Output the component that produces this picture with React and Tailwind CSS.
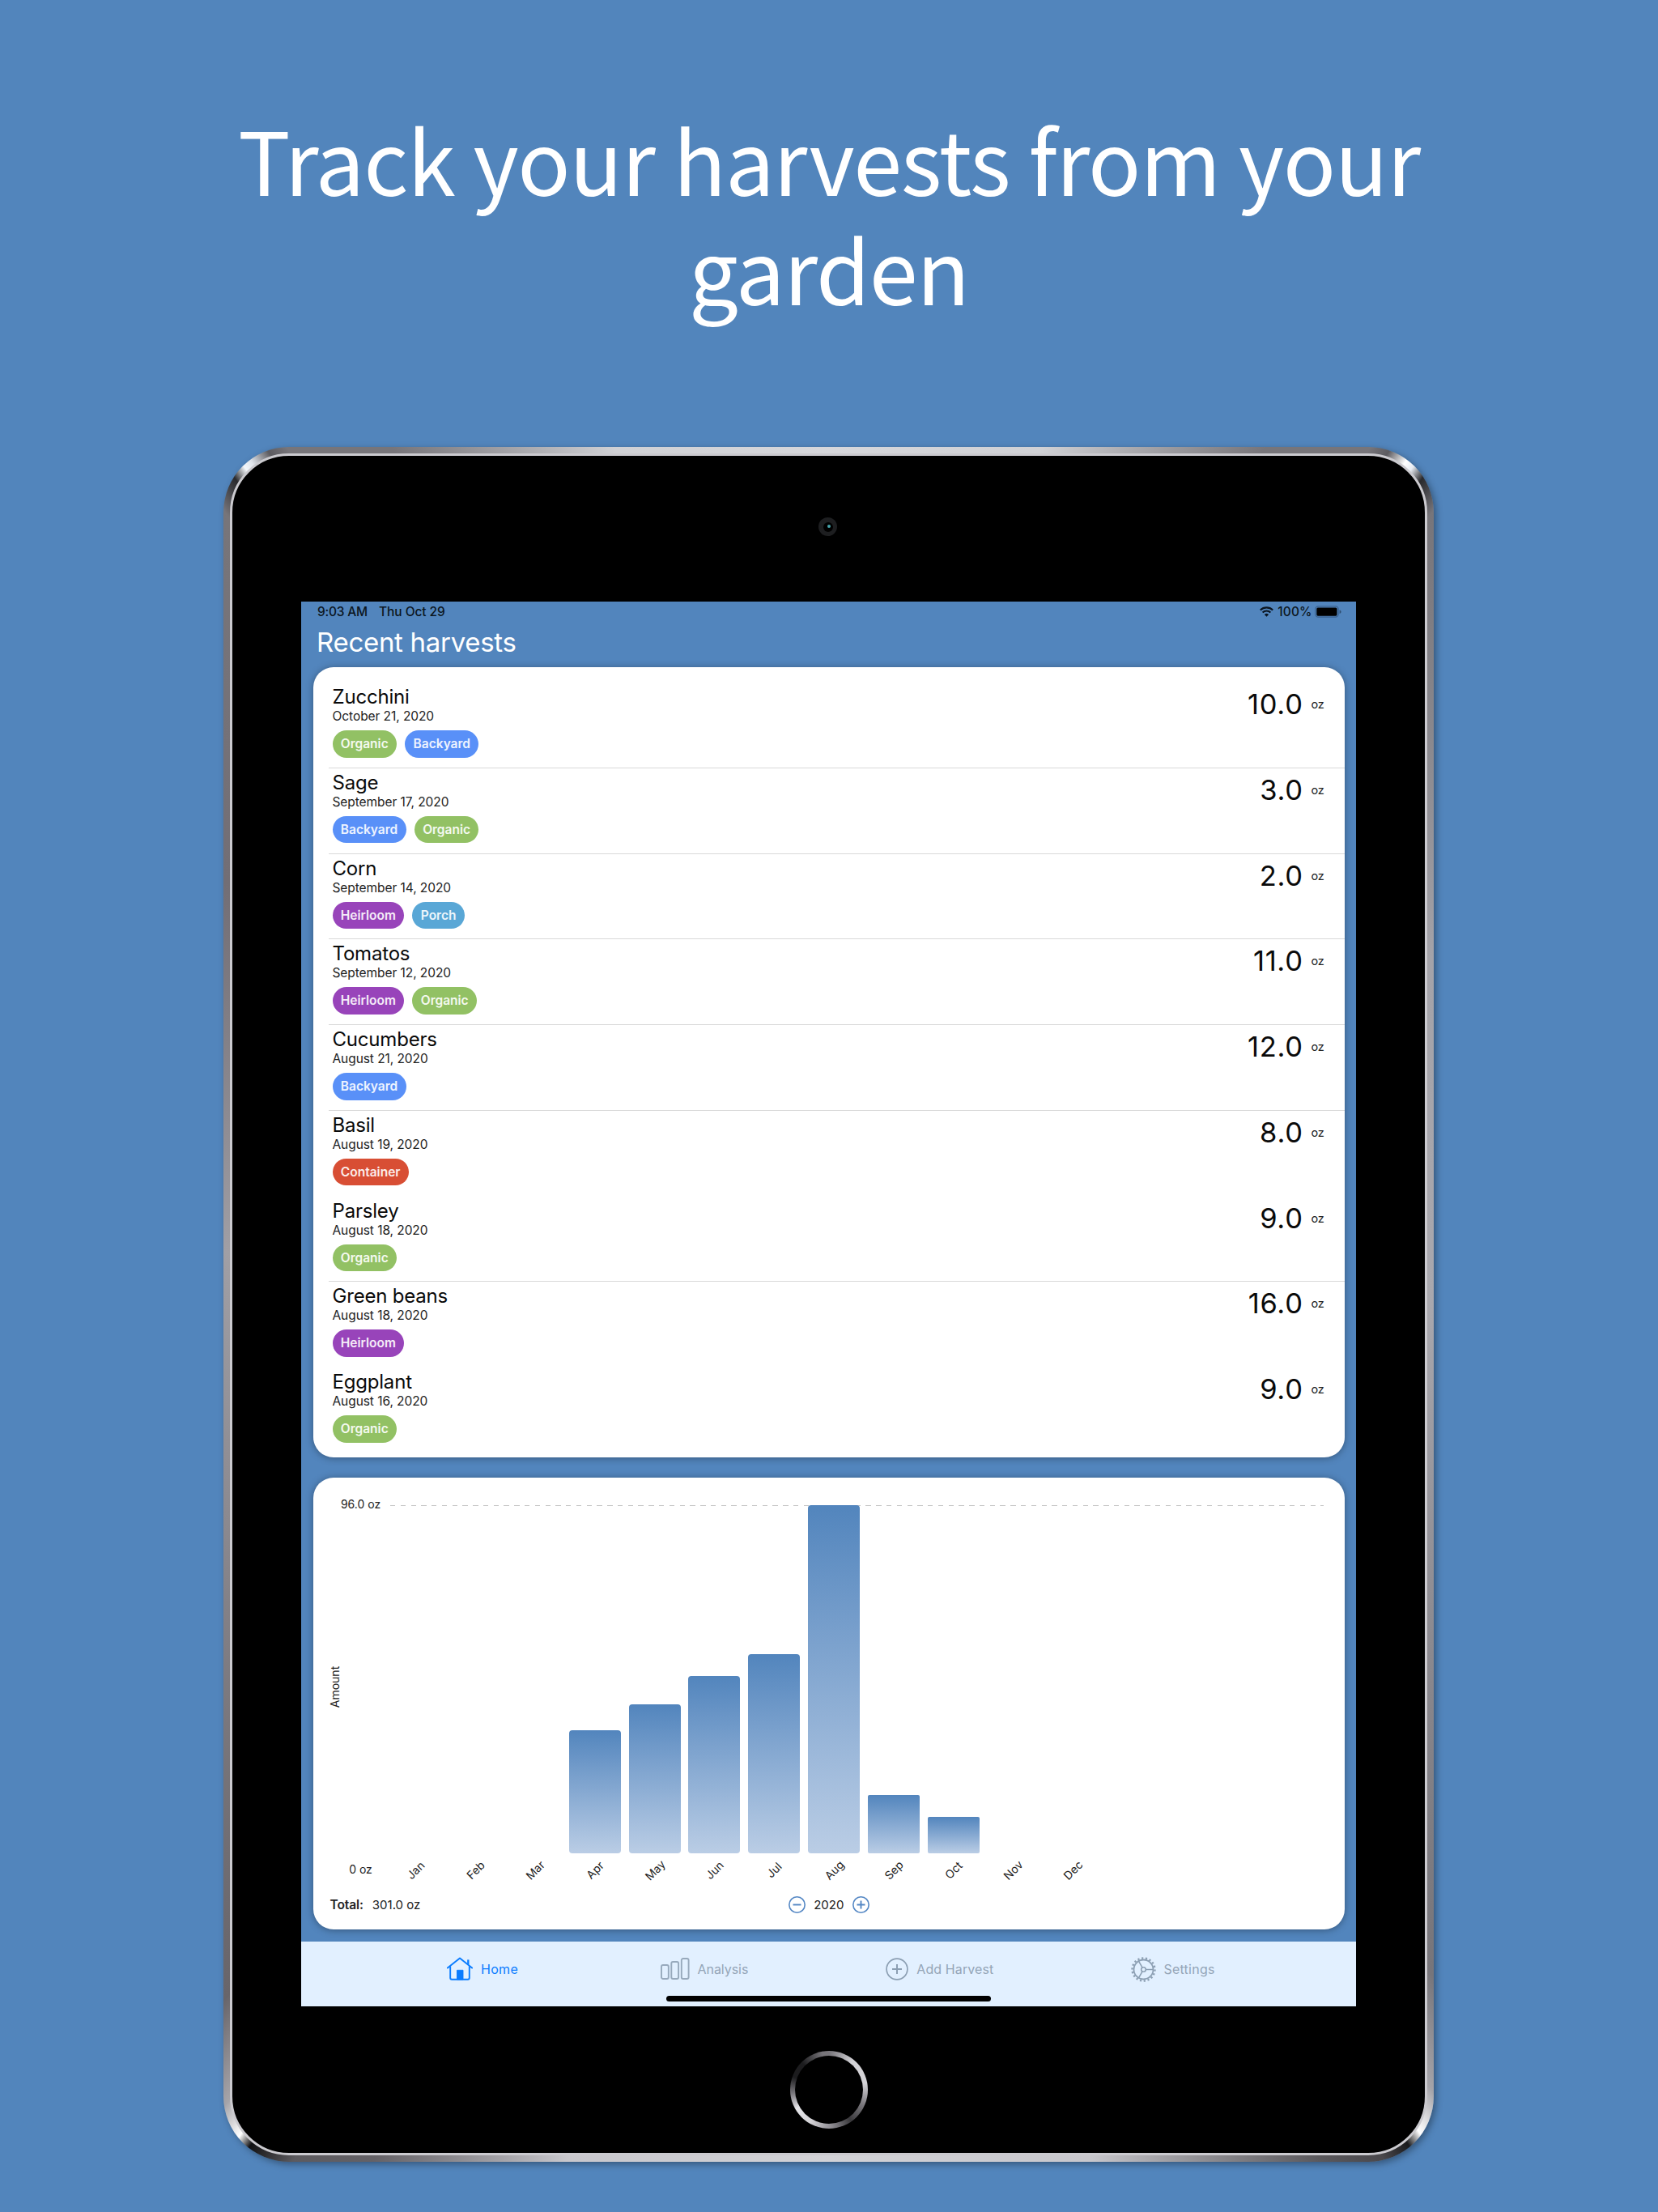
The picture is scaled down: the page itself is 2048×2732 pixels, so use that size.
import React from "react";

const CHIP = {
  Organic: "bg-[#92c164]",
  Backyard: "bg-[#5990f8]",
  Heirloom: "bg-[#9844ba]",
  Porch: "bg-[#59a7d6]",
  Container: "bg-[#d84e34]",
};

const HARVESTS = [
  { name: "Zucchini", date: "October 21, 2020", tags: ["Organic", "Backyard"], amount: "10.0", line: true },
  { name: "Sage", date: "September 17, 2020", tags: ["Backyard", "Organic"], amount: "3.0", line: true },
  { name: "Corn", date: "September 14, 2020", tags: ["Heirloom", "Porch"], amount: "2.0", line: true },
  { name: "Tomatos", date: "September 12, 2020", tags: ["Heirloom", "Organic"], amount: "11.0", line: true },
  { name: "Cucumbers", date: "August 21, 2020", tags: ["Backyard"], amount: "12.0", line: true },
  { name: "Basil", date: "August 19, 2020", tags: ["Container"], amount: "8.0", line: false },
  { name: "Parsley", date: "August 18, 2020", tags: ["Organic"], amount: "9.0", line: true },
  { name: "Green beans", date: "August 18, 2020", tags: ["Heirloom"], amount: "16.0", line: false },
  { name: "Eggplant", date: "August 16, 2020", tags: ["Organic"], amount: "9.0", line: false },
];

const MONTHS = [
  ["Jan", 0],
  ["Feb", 0],
  ["Mar", 0],
  ["Apr", 34],
  ["May", 41],
  ["Jun", 49],
  ["Jul", 55],
  ["Aug", 96],
  ["Sep", 16],
  ["Oct", 10],
  ["Nov", 0],
  ["Dec", 0],
];

function StatusBar() {
  return (
    <div className="flex h-[22px] items-center pt-[3px] pl-5 pr-[18.5px] text-[15.5px] leading-[20px] font-medium text-[#0b1520]">
      <span className="tracking-[-0.2px]">9:03 AM</span>
      <span className="ml-[14px] tracking-[-0.08px]">Thu Oct 29</span>
      <div className="ml-auto flex items-center">
        <svg width="17" height="13" viewBox="0 0 17 13" fill="none" stroke="#0b1520" strokeWidth="2.1">
          <path d="M0.8 4.6A10.9 10.9 0 0 1 16.2 4.6" />
          <path d="M3.6 7.5A7 7 0 0 1 13.4 7.5" />
          <path d="M8.5 12.8L5.9 10.1A3.7 3.7 0 0 1 11.1 10.1Z" fill="#0b1520" stroke="none" />
        </svg>
        <span className="ml-[5.5px] tracking-[0.1px]">100%</span>
        <svg className="ml-[3px]" width="33" height="15" viewBox="0 0 33 15">
          <rect x="0.8" y="0.8" width="28.4" height="13.4" rx="3.6" fill="none" stroke="#3a6190" strokeWidth="1.2" />
          <rect x="2.3" y="2.5" width="25.2" height="10.2" rx="1.6" fill="#000" />
          <path d="M30.6 5.2c1.4.5 2 1.300 2 2.400s-.6 1.900-2 2.400z" fill="#2f4f72" />
        </svg>
      </div>
    </div>
  );
}

function HarvestRow({ item }) {
  return (
    <li
      className={
        "ml-[19px] flex h-[105.75px] items-start border-b pl-[5px] pr-[25.500px] " +
        (item.line ? "border-[#d9d9d9]" : "border-transparent")
      }
    >
      <div className="pt-[3px]">
        <div className="text-[24px] leading-[29px] tracking-[-0.2px] text-[#0a0a0a]">{item.name}</div>
        <div className="text-[15.5px] leading-[19px] tracking-[-0.07px] text-[#222]">{item.date}</div>
        <div className="mt-[8px] flex gap-[10.300px]">
          {item.tags.map((tag) => (
            <span
              key={tag}
              className={
                "h-[33.5px] rounded-full px-[10.300px] text-[15.5px] leading-[33.5px] font-semibold text-white/90 " + CHIP[tag]
              }
            >
              {tag}
            </span>
          ))}
        </div>
      </div>
      <div className="ml-auto flex items-center gap-[10px] pt-[6px]">
        <span className="text-[34.5px] leading-[42px] tracking-[0.7px] text-[#0a0a0a]">{item.amount}</span>
        <span className="text-[14.5px] leading-[18px] tracking-[-0.3px] text-[#222]">oz</span>
      </div>
    </li>
  );
}

function YearButton({ plus }) {
  return (
    <svg width="21" height="21" viewBox="0 0 21 21" fill="none" stroke="#5487c4" strokeWidth="1.6">
      <circle cx="10.5" cy="10.5" r="9.7" />
      <path d={plus ? "M5.500 10.500h10M10.500 5.500v10" : "M5.500 10.500h10"} strokeWidth="1.9" />
    </svg>
  );
}

function Chart() {
  return (
    <section className="mt-[25px] h-[558px] rounded-[25px] bg-white px-[21px] pt-6 text-[#222] shadow-[0_1px_10px_rgba(0,0,0,0.35)]">
      <div className="flex h-[468px] text-[14px] leading-[17px]">
        <div className="flex w-[13.500px] items-center justify-center pr-[2px]">
          <span className="-rotate-90 whitespace-nowrap">Amount</span>
        </div>
        <div className="flex w-[49px] flex-col items-center justify-between whitespace-nowrap">
          <span>96.0 oz</span>
          <span>0 oz</span>
        </div>
        <div className="ml-[11.500px] w-[1153px] pt-[10px]">
          <div className="h-px bg-[repeating-linear-gradient(90deg,#c6c6c6_0px,#c6c6c6_6.400px,transparent_6.400px,transparent_12.770px)]" />
          <div className="-mt-px flex h-[430px] items-end gap-[9.800px]">
            {MONTHS.map(([m, v]) => (
              <div
                key={m}
                className={
                  "w-[64px] bg-linear-to-b from-[#5285bd] to-[#bacde5] " + (v > 16 ? "rounded-[4px]" : "rounded-[2px]")
                }
                style={{ height: `${(v / 96) * 100}%` }}
              />
            ))}
          </div>
          <div className="flex gap-[9.800px] pt-[12px]">
            {MONTHS.map(([m]) => (
              <div key={m} className="flex w-[64px] justify-center">
                <span className="-rotate-45">{m}</span>
              </div>
            ))}
          </div>
        </div>
      </div>
      <div className="mt-[25px] grid grid-cols-3 items-center text-[15px] leading-[21px]">
        <div className="flex gap-[11px]">
          <span className="text-[15.5px] font-semibold tracking-[-0.1px]">Total:</span>
          <span>301.0 oz</span>
        </div>
        <div className="flex items-center justify-center gap-[10.500px]">
          <YearButton />
          <span>2020</span>
          <YearButton plus />
        </div>
      </div>
    </section>
  );
}

function HomeIcon() {
  return (
    <svg width="32" height="30" viewBox="0 0 32 30" fill="none" stroke="#0a7cff" strokeWidth="1.9" strokeLinejoin="round">
      <path d="M0.900 13.600L16 1.600L31.100 13.600" strokeLinecap="round" />
      <path d="M26.300 9.500V3.400" strokeWidth="2.300" />
      <path d="M4.200 11.500V25.800a1.900 1.900 0 0 0 1.900 1.900H25.900a1.900 1.900 0 0 0 1.900-1.900V11.500" />
      <path d="M12.500 28V16.300H20V28z" fill="#0a7cff" strokeWidth="0.900" />
    </svg>
  );
}

function BarsIcon() {
  return (
    <svg width="36" height="28" viewBox="0 0 36 28" fill="none" stroke="#97a9bc" strokeWidth="1.900">
      <rect x="1" y="9" width="8.800" height="17" rx="2" />
      <rect x="13.300" y="5" width="8.800" height="21" rx="2" />
      <rect x="25.800" y="1" width="8.800" height="25" rx="2" />
    </svg>
  );
}

function AddIcon() {
  return (
    <svg width="28" height="28" viewBox="0 0 28 28" fill="none" stroke="#8c9fb3" strokeWidth="1.700">
      <circle cx="14" cy="14" r="12.900" />
      <path d="M8 14h12M14 8v12" strokeWidth="2" />
    </svg>
  );
}

function GearIcon() {
  return (
    <svg width="31" height="31" viewBox="0 0 31 31" fill="none" stroke="#8c9fb3" strokeWidth="1.800">
      <circle cx="15.500" cy="15.500" r="12" />
      <circle cx="15.500" cy="15.500" r="14" strokeWidth="2.400" pathLength="36" strokeDasharray="0.9 1.100" />
      <circle cx="15.500" cy="15.500" r="2.800" strokeWidth="1.600" />
      <path d="M18.300 15.500H27.500M14.100 13.100L9.500 5.100M14.100 17.900L9.500 25.900" strokeWidth="1.600" />
    </svg>
  );
}

function TabBar() {
  return (
    <nav className="mt-[15px] flex h-[80px] flex-col bg-[#e2f0ff] text-[16px] leading-[20px] tracking-[0.1px] text-[#94a5b7]">
      <div className="flex h-[66.500px] items-center pt-[2px] pl-[180px] whitespace-nowrap">
        <div className="flex items-center gap-[10px] tracking-[0.3px] text-[#0a7cff]">
          <HomeIcon />
          Home
        </div>
        <div className="ml-[175.500px] flex items-center gap-[10px] tracking-[-0.05px]">
          <BarsIcon />
          Analysis
        </div>
        <div className="ml-[170px] flex items-center gap-[10px]">
          <AddIcon />
          Add Harvest
        </div>
        <div className="ml-[170px] flex items-center gap-[9px] tracking-[0.25px]">
          <GearIcon />
          Settings
        </div>
      </div>
      <div className="mx-auto h-[7.500px] w-[401px] rounded-full bg-black" />
    </nav>
  );
}

function Screen() {
  return (
    <div className="h-[1735px] w-[1303px] overflow-hidden bg-[#5285bd]">
      <StatusBar />
      <h2 className="mt-2 pl-[19px] text-[33px] leading-[40px] tracking-[-0.300px] text-white">Recent harvests</h2>
      <main className="mt-[10.500px] pr-[14px] pl-[14.500px]">
        <ul className="h-[976.500px] rounded-[25px] bg-white pt-[19.500px] shadow-[0_1px_10px_rgba(0,0,0,0.35)]">
          {HARVESTS.map((item, i) => (
            <HarvestRow key={i} item={item} />
          ))}
        </ul>
        <Chart />
      </main>
      <TabBar />
    </div>
  );
}

export default function App() {
  return (
    <div className="flex h-[2732px] w-[2048px] flex-col overflow-hidden bg-[#5285bc] pt-[128px] font-[Inter,'Liberation_Sans',sans-serif]">
      <h1 className="text-center font-['Noto_Sans_CJK_SC',sans-serif] text-[108px] leading-[135px] tracking-[-1.180px] text-white">
        <span className="block">Track your harvests from your</span>
        <span className="block">garden</span>
      </h1>
      <div className="mt-[154px] ml-[276px] h-[2118px] w-[1495px] shrink-0 rounded-[81px] bg-[conic-gradient(#d6d7db_0deg,#d0d1d5_14deg,#77757a_27deg,#77757a_32.300deg,#5c5b60_33.300deg,#ffffff_34.400deg,#e8ecf2_34.900deg,#2a2a2d_35.700deg,#3f3f43_36.200deg,#77757a_37.300deg,#a4a3a9_60deg,#a9a8ae_90deg,#8b898f_120deg,#77757a_138deg,#a5a4a9_142.500deg,#ffffff_144.500deg,#1a1a1c_145.400deg,#4a484c_147deg,#59575b_150deg,#c8c7cc_163deg,#d2d2d6_180deg,#c8c7cc_197deg,#646166_208deg,#5c5a5e_212deg,#111113_214.500deg,#ffffff_215.300deg,#a5a4a9_217deg,#68656a_221deg,#8b898f_250deg,#a09fa5_275deg,#726e75_305deg,#77757a_322.700deg,#3f3f43_323.800deg,#2a2a2d_324.300deg,#f4f7fb_325.100deg,#e0e4ea_325.600deg,#5c5b60_326.700deg,#77757a_327.700deg,#77757a_333deg,#d0d1d5_346deg,#d6d7db_360deg)] p-[8px] shadow-[3px_3px_8px_rgba(0,0,0,0.35)]">
        <div className="flex h-full flex-col items-center rounded-[73px] border-[3px] border-[#cbcacf] bg-black pt-[76px]">
          <div className="mr-[2px] flex size-[23px] items-center justify-center rounded-full bg-[#1d1e20]">
            <div className="flex size-[12px] items-center justify-center rounded-full bg-black">
              <div className="mb-px ml-[3px] size-[4px] rounded-full bg-[#46a5ac]" />
            </div>
          </div>
          <div className="mt-[81px] self-start pl-[85px]">
            <Screen />
          </div>
          <div className="mt-[55px] size-[96px] rounded-full bg-[conic-gradient(#77757a_0deg,#d4d3d7_40deg,#d4d3d7_80deg,#77757a_115deg,#3a393c_145deg,#8b898f_175deg,#d4d3d7_210deg,#e6e6ea_240deg,#77757a_265deg,#1c1c1e_290deg,#1c1c1e_315deg,#77757a_350deg,#77757a_360deg)] p-[6px]">
            <div className="size-full rounded-full bg-black" />
          </div>
        </div>
      </div>
    </div>
  );
}
